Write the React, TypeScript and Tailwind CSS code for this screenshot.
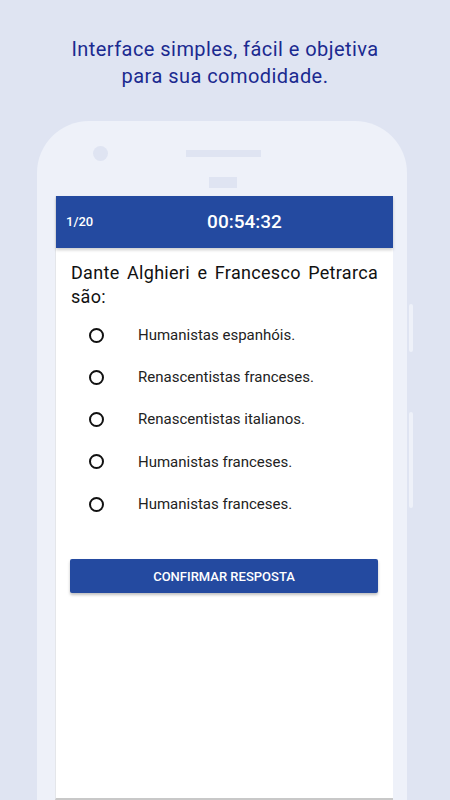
import { FC } from "react";

const options = [
	"Humanistas espanhóis.",
	"Renascentistas franceses.",
	"Renascentistas italianos.",
	"Humanistas franceses.",
	"Humanistas franceses.",
];

const Option: FC<{ label: string }> = ({ label }) => {
	return (
		<div className="flex items-center h-[42.25px]">
			<span className="ml-[33px] w-[15px] h-[15px] rounded-full border-2 border-[#111] shrink-0" />
			<span className="ml-[34px] text-[15px] text-[#222]">{label}</span>
		</div>
	);
};

const App: FC = () => {
	return (
		<div
			className="w-[450px] h-[800px] overflow-hidden bg-[#dfe4f2] pt-[36px]"
			style={{ fontFamily: "Roboto, 'Noto Sans', sans-serif" }}
		>
			<p className="text-center text-[20px] leading-[27px] text-[#1b2a90] tracking-[0.45px]">
				Interface simples, fácil e objetiva
				<br />
				para sua comodidade.
			</p>

			<div className="relative ml-[37px] mt-[31px] w-[370px] h-[700px] rounded-t-[52px] bg-[#eef1f9]">
				{/* side buttons */}
				<div className="absolute left-[372px] top-[183px] w-[4px] h-[48px] rounded-sm bg-[#eef1f9]" />
				<div className="absolute left-[372px] top-[291px] w-[4px] h-[96px] rounded-sm bg-[#eef1f9]" />

				<div className="pt-[25px] flex items-center h-[40px]">
					<span className="ml-[56px] w-[15px] h-[15px] rounded-full bg-[#dfe4f2]" />
					<span className="ml-[78px] w-[75px] h-[7px] bg-[#dfe4f2]" />
				</div>
				<div className="ml-[172px] mt-[16px] w-[28px] h-[11px] bg-[#dfe4f2]" />

				<div className="ml-[18px] mt-[8px] w-[338px] h-[604px] bg-white border-b-2 border-[#c8c8c8] border-l border-l-[#e4e6ea]">
					<div className="flex items-center h-[52px] bg-[#244aa0] text-white shadow-[0_2px_3px_rgba(0,0,0,0.2)]">
						<span className="pl-[10px] text-[13px] font-medium w-[38px]">1/20</span>
						<span className="flex-1 text-center text-[19px] font-medium pl-[2px]">
							00:54:32
						</span>
					</div>

					<p className="px-[15px] pt-[13px] text-[18px] leading-[24px] text-[#111] text-justify tracking-[0.3px]">
						Dante Alghieri e Francesco Petrarca são:
					</p>

					<div className="mt-[5px]">
						{options.map((option, i) => (
							<Option key={i} label={option} />
						))}
					</div>

					<button
						type="button"
						className="ml-[14px] mt-[34px] w-[308px] h-[34px] rounded-[2px] bg-[#244aa0] text-white text-[13px] font-medium shadow-[0_2px_3px_rgba(0,0,0,0.25)]"
					>
						CONFIRMAR RESPOSTA
					</button>
				</div>
			</div>
		</div>
	);
};

export default App;
